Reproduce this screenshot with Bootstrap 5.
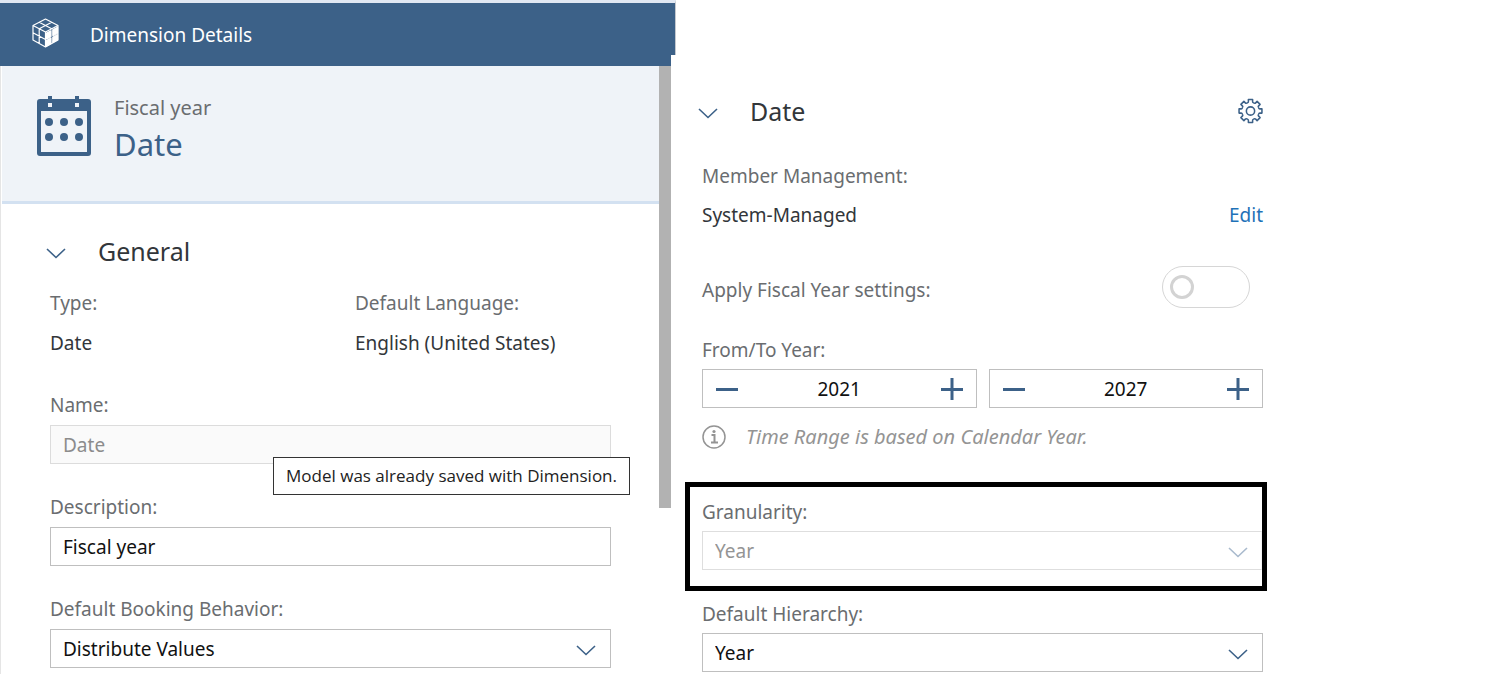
<!DOCTYPE html>
<html lang="en">
<head>
<meta charset="utf-8">
<meta name="viewport" content="width=device-width, initial-scale=1">
<title>Dimension Details</title>
<link rel="stylesheet" href="https://cdn.jsdelivr.net/npm/bootstrap@5.3.0/dist/css/bootstrap.min.css">
<style>
  :root { --brand: #3c6188; --label: #6a6d70; --line: #bfbfbf; }
  body { font-family: "Noto Sans", "Open Sans", sans-serif; font-size: 19px; line-height: 24px; color: #32363a; background: #fff; overflow: hidden; }
  .layout { display: grid; grid-template-columns: minmax(0, 671fr) minmax(0, 596fr) minmax(0, 222fr); }
  .top-bar { position: relative; height: 66px; padding-left: 32px; gap: 31px; background: var(--brand); border-top: 3px solid #e1e8f3; }
  .top-bar::after { content: ""; position: absolute; left: 100%; top: -3px; width: 5px; height: 55px; background: var(--brand); border-top: 3px solid #e1e8f3; border-right: 1px solid #c4c8ce; }
  .top-bar svg { margin-bottom: 3px; }
  .top-bar h1 { font-size: 19px; line-height: 24px; color: #fff; font-weight: 400; }
  .panel-content { border-left: 1px solid #e5e5e5; }
  .thumb { width: 12px; height: 442px; background: #b2b2b2; }
  .hero { height: 138px; margin-left: 1px; padding: 28px 35px; gap: 23px; background: #eff3f8; border-bottom: 3px solid #d3e1f1; }
  .hero p { color: var(--label); font-size: 20px; line-height: 28px; }
  .hero h2 { color: var(--brand); font-size: 31px; line-height: 44px; font-weight: 400; }
  .general { padding: 31px 48px 6px 49px; }
  .section-title { font-size: 25px; line-height: 32px; font-weight: 400; }
  .toggle { padding: 0; border: 0; background: none; line-height: 0; }
  .toggle.chevron { margin: 4px 32px 0 -4px; }
  .facts { display: grid; grid-template-columns: 305fr 256fr; padding: 24px 0 38px; }
  .facts dt, .field-label { color: var(--label); font-size: 19px; font-weight: 400; line-height: 24px; }
  .facts dt { margin-bottom: 16px; }
  .field { margin-bottom: 31px; }
  .field-label { display: block; margin-bottom: 8px; }
  .form-control, .form-select { height: 39px; padding: 0 12px; font-size: 19px; line-height: 36px; color: #111; border: 1px solid var(--line); border-radius: 0; }
  .form-control:disabled { background: #fafafa; color: #8c8c8c; border-color: #dcdcdc; opacity: 1; }
  .form-select { background-color: #fff; background-position: right 14px top 14px; background-size: 20px 12px;
    background-image: url("data:image/svg+xml,%3Csvg xmlns='http://www.w3.org/2000/svg' viewBox='0 0 20 12'%3E%3Cpath d='M1 2l9 8.500 9-8.500' fill='none' stroke='%233c6188' stroke-width='1.600'/%3E%3C/svg%3E"); }
  .form-select:disabled { background-color: #fff; color: #949494; border-color: #dedede;
    background-image: url("data:image/svg+xml,%3Csvg xmlns='http://www.w3.org/2000/svg' viewBox='0 0 20 12'%3E%3Cpath d='M1 2l9 8.500 9-8.500' fill='none' stroke='%23a9bacd' stroke-width='1.600'/%3E%3C/svg%3E"); }
  .hint { position: absolute; z-index: 2; right: -19px; top: 64px; height: 38px; padding: 0 12px; font-family: "Open Sans", "Noto Sans", sans-serif; font-size: 17px; line-height: 36px; color: #222; background: #fff; border: 1px solid #333; white-space: nowrap; }
  .date-panel { padding-top: 95px; padding-left: 14px; }
  .inset { padding: 0 4px 0 17px; }
  .member { padding-top: 37px; padding-bottom: 39px; }
  .member .field-label { margin-bottom: 15px; }
  .edit-link { color: #1f72b8; text-decoration: none; }
  .switch-input.form-check-input { width: 88px; height: 42px; margin: 0 13px 0 0; border: 1px solid #d6d6d6; border-radius: 21px; background-color: #fff; background-size: 38px 38px; background-position: left center; opacity: 1;
    background-image: url("data:image/svg+xml,%3Csvg xmlns='http://www.w3.org/2000/svg' viewBox='0 0 38 38'%3E%3Ccircle cx='19' cy='19' r='10.500' fill='none' stroke='%23d3d3d3' stroke-width='3'/%3E%3C/svg%3E"); }
  .switch-row .field-label { margin: 0; padding-top: 6px; }
  .years { padding-top: 30px; }
  .years-row { gap: 12px; }
  .stepper { display: flex; flex: 1 1 0; min-width: 0; height: 39px; border: 1px solid var(--line); }
  .stepper button { flex: none; width: 48px; padding: 0; border: 0; background: none; line-height: 0; }
  .stepper input { flex: 1 1 0; min-width: 0; border: 0; padding: 0; text-align: center; color: #111; background: none; }
  .note { color: #949494; font-size: 20px; font-style: italic; padding-top: 17px; padding-bottom: 33px; gap: 20px; }
  .callout-box { border: 5px solid #000; padding: 13px 0 16px 12px; }
  .callout-box .form-select { border-right-color: #f2f2f2; background-position: right 13px top 14px; }
  .tight { margin-bottom: 7px; }
  .hierarchy { padding-top: 11px; }
</style>
</head>
<body>
<div class="layout">
  <section>
    <header class="top-bar d-flex align-items-center">
      <svg width="27" height="30" viewBox="0 0 27 30" fill="none" stroke="#fff" stroke-width="1.200" stroke-linejoin="round" aria-hidden="true">
        <path d="M13.500 1L26 7.500v14.500l-12.500 7L1 22V7.500zM1 7.500l12.500 6.500L26 7.500M13.500 14v15M7.200 4.200l12.500 6.500M19.800 4.200L7.200 10.700M7.200 10.700v15M1 14.800l12.500 6.700"/>
        <path d="M14.500 15l4.500-2.300v5.800l-4.500 2.400zM20.800 11.700L25.500 9.300v5.900l-4.700 2.400zM14.500 22.500l4.500-2.400v5.400l-4.500 2.500zM20.800 19.200l4.700-2.500v5l-4.700 2.700z" fill="#fff"/>
      </svg>
      <h1 class="m-0">Dimension Details</h1>
    </header>
    <div class="d-flex align-items-start">
      <div class="panel-content flex-grow-1">
        <div class="hero d-flex">
          <svg class="flex-shrink-0" width="54" height="62" viewBox="0 0 54 62" aria-hidden="true">
            <path fill="#3c6188" fill-rule="evenodd" d="M3 5h8V2h4v3h23V2h4v3h9q3 0 3 3v51q0 3-3 3H3q-3 0-3-3V8q0-3 3-3zM4 17v41h46V17zM11 9v4h4V9zM38 9v4h4V9z"/>
            <g fill="#3c6188"><circle cx="12" cy="28" r="4"/><circle cx="27" cy="28" r="4"/><circle cx="42" cy="28" r="4"/><circle cx="12" cy="43" r="4"/><circle cx="27" cy="43" r="4"/><circle cx="42" cy="43" r="4"/></g>
          </svg>
          <div>
            <p class="m-0">Fiscal year</p>
            <h2 class="m-0">Date</h2>
          </div>
        </div>
        <form class="general">
          <div class="d-flex align-items-center">
            <button type="button" class="toggle chevron" aria-label="Collapse General"><svg width="20" height="12" viewBox="0 0 20 12" fill="none" stroke="#3c6188" stroke-width="1.600"><path d="M1 2l9 8.500 9-8.500"/></svg></button>
            <h2 class="section-title m-0">General</h2>
          </div>
          <dl class="facts m-0">
            <div><dt>Type:</dt><dd class="m-0">Date</dd></div>
            <div><dt>Default Language:</dt><dd class="m-0">English (United States)</dd></div>
          </dl>
          <div class="field position-relative">
            <label class="field-label" for="name">Name:</label>
            <input id="name" class="form-control" type="text" value="Date" disabled>
            <div class="hint" role="tooltip">Model was already saved with Dimension.</div>
          </div>
          <div class="field">
            <label class="field-label" for="description">Description:</label>
            <input id="description" class="form-control" type="text" value="Fiscal year">
          </div>
          <div>
            <label class="field-label" for="booking">Default Booking Behavior:</label>
            <select id="booking" class="form-select"><option>Distribute Values</option></select>
          </div>
        </form>
      </div>
      <div class="thumb flex-shrink-0"></div>
    </div>
  </section>

  <form class="date-panel">
    <div class="inset d-flex align-items-center">
      <button type="button" class="toggle chevron" aria-label="Collapse Date"><svg width="20" height="12" viewBox="0 0 20 12" fill="none" stroke="#3c6188" stroke-width="1.600"><path d="M1 2l9 8.500 9-8.500"/></svg></button>
      <h2 class="section-title m-0">Date</h2>
      <button type="button" class="toggle ms-auto" aria-label="Date settings">
        <svg width="25" height="26" viewBox="-13 -13 26 26" fill="none" stroke="#3c6188" stroke-width="1.600" stroke-linejoin="round">
          <defs><path id="tooth" d="M-3.600 -8.700Q-2.200 -8.400 -2.200 -9.800V-11.900H2.200V-9.800Q2.200 -8.400 3.600 -8.700"/></defs>
          <use href="#tooth"/><use href="#tooth" transform="rotate(45)"/><use href="#tooth" transform="rotate(90)"/><use href="#tooth" transform="rotate(135)"/><use href="#tooth" transform="rotate(180)"/><use href="#tooth" transform="rotate(225)"/><use href="#tooth" transform="rotate(270)"/><use href="#tooth" transform="rotate(315)"/>
          <circle r="4.300"/>
        </svg>
      </button>
    </div>
    <div class="inset member">
      <div class="field-label">Member Management:</div>
      <div class="d-flex justify-content-between"><span>System-Managed</span><a class="edit-link" href="#">Edit</a></div>
    </div>
    <div class="inset switch-row d-flex justify-content-between align-items-center">
      <label class="field-label" for="fiscal">Apply Fiscal Year settings:</label>
      <input id="fiscal" class="form-check-input switch-input" type="checkbox" role="switch">
    </div>
    <fieldset class="inset years">
      <legend class="field-label tight">From/To Year:</legend>
      <div class="d-flex years-row">
        <div class="stepper">
          <button type="button" aria-label="Decrease from year"><svg width="22" height="22" stroke="#3c6188" stroke-width="3"><path d="M0 11.500h22"/></svg></button>
          <input type="text" inputmode="numeric" value="2021" aria-label="From year">
          <button type="button" aria-label="Increase from year"><svg width="22" height="22" stroke="#3c6188" stroke-width="3"><path d="M0 11.500h22M11 0v22"/></svg></button>
        </div>
        <div class="stepper">
          <button type="button" aria-label="Decrease to year"><svg width="22" height="22" stroke="#3c6188" stroke-width="3"><path d="M0 11.500h22"/></svg></button>
          <input type="text" inputmode="numeric" value="2027" aria-label="To year">
          <button type="button" aria-label="Increase to year"><svg width="22" height="22" stroke="#3c6188" stroke-width="3"><path d="M0 11.500h22M11 0v22"/></svg></button>
        </div>
      </div>
    </fieldset>
    <div class="inset note d-flex align-items-center">
      <svg width="24" height="24" viewBox="0 0 24 24" fill="none" stroke="#949494" aria-hidden="true"><circle cx="12" cy="12" r="11" stroke-width="1.500"/><path d="M9.500 10h3v7M9 17.500h7" stroke-width="2"/><circle cx="12" cy="6.500" r="1.600" fill="#949494" stroke="none"/></svg>
      <span>Time Range is based on Calendar Year.</span>
    </div>
    <div class="callout-box">
      <label class="field-label tight" for="granularity">Granularity:</label>
      <select id="granularity" class="form-select" disabled><option>Year</option></select>
    </div>
    <div class="inset hierarchy">
      <label class="field-label tight" for="hierarchy">Default Hierarchy:</label>
      <select id="hierarchy" class="form-select"><option>Year</option></select>
    </div>
  </form>
</div>
<script src="https://cdn.jsdelivr.net/npm/bootstrap@5.3.0/dist/js/bootstrap.bundle.min.js"></script>
</body>
</html>
